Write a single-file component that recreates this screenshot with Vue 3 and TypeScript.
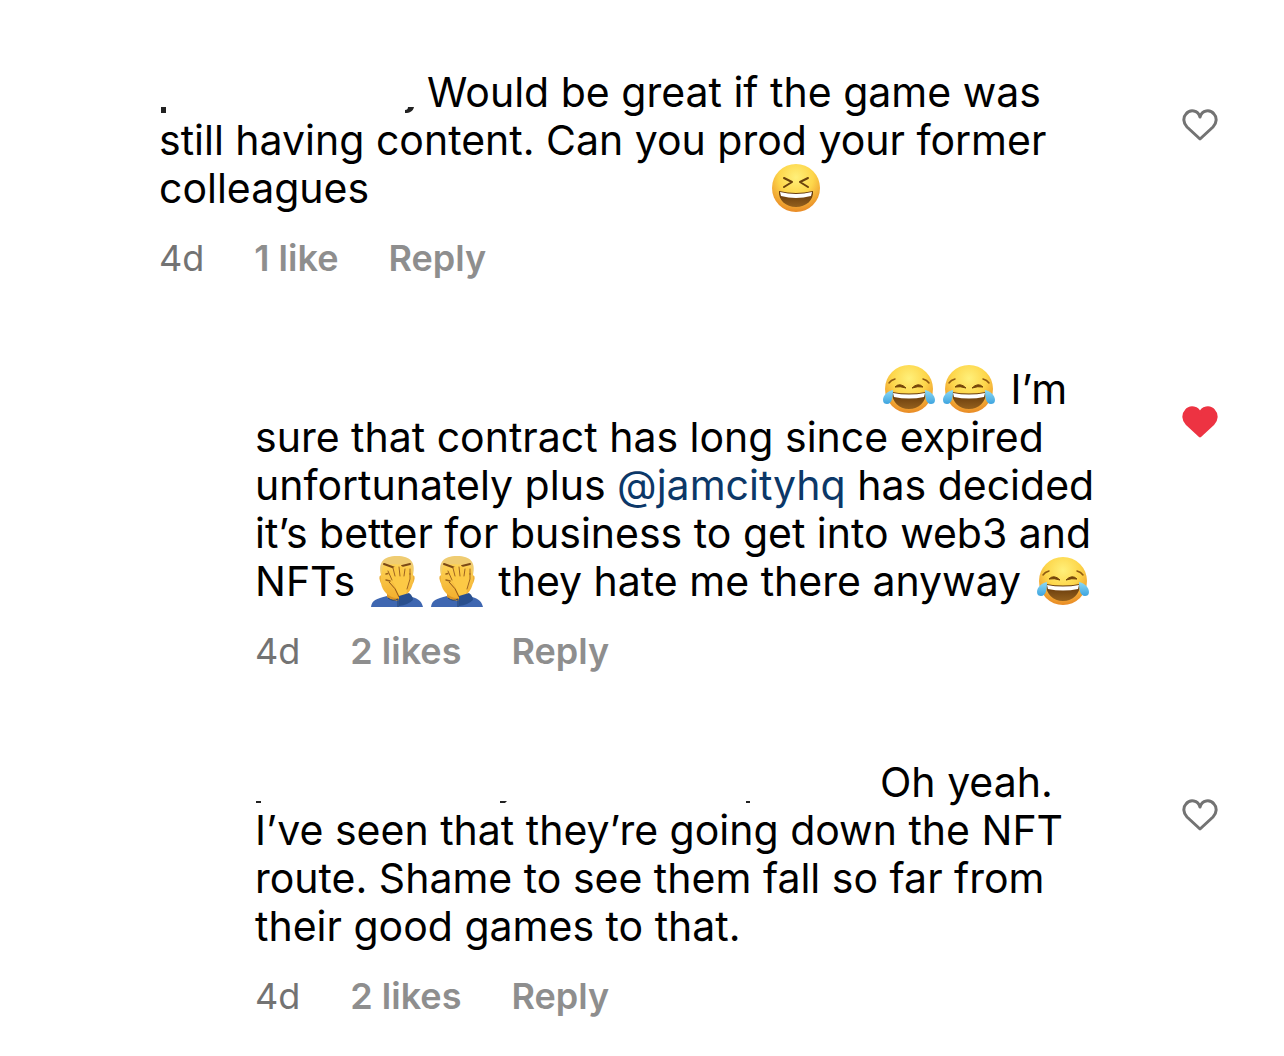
<script setup lang="ts">
import { ref } from 'vue'

type Part =
  | { kind: 'text'; text: string }
  | { kind: 'mention'; text: string }
  | { kind: 'gap'; width: number; marks?: string[] }
  | { kind: 'emoji'; name: 'laugh' | 'joy' | 'palm' }

interface Comment {
  id: number
  reply: boolean
  liked: boolean
  likes: string
  lines: Part[][]
}

const t = (text: string): Part => ({ kind: 'text', text })
const gap = (width: number, marks?: string[]): Part => ({ kind: 'gap', width, marks })
const emoji = (name: 'laugh' | 'joy' | 'palm'): Part => ({ kind: 'emoji', name })

const comments = ref<Comment[]>([
  {
    id: 1,
    reply: false,
    liked: false,
    likes: '1 like',
    lines: [
      [gap(268, ['M2 0h5v6h-5z', 'M246 6v-3q3 0 3-3h6c-1 4-4 6-9 6z']), t('Would be great if the game was')],
      [t('still having content. Can you prod your former')],
      [t('colleagues'), gap(397), emoji('laugh')],
    ],
  },
  {
    id: 2,
    reply: true,
    liked: true,
    likes: '2 likes',
    lines: [
      [gap(624), emoji('joy'), emoji('joy'), t(' I’m')],
      [t('sure that contract has long since expired')],
      [t('unfortunately plus '), { kind: 'mention', text: '@jamcityhq' }, t(' has decided')],
      [t('it’s better for business to get into web3 and')],
      [t('NFTs '), emoji('palm'), emoji('palm'), t(' they hate me there anyway '), emoji('joy')],
    ],
  },
  {
    id: 3,
    reply: true,
    liked: false,
    likes: '2 likes',
    lines: [
      [gap(625, ['M1 4h5v2h-5z', 'M245 4h7l-2 2h-5z', 'M491 4h4v2h-4z']), t('Oh yeah.')],
      [t('I’ve seen that they’re going down the NFT')],
      [t('route. Shame to see them fall so far from')],
      [t('their good games to that.')],
    ],
  },
])
</script>

<template>
  <svg class="defs" aria-hidden="true">
    <defs>
      <radialGradient id="face" cx="50%" cy="28%" r="72%">
        <stop offset="0" stop-color="#fff07a" />
        <stop offset=".5" stop-color="#fdd64b" />
        <stop offset="1" stop-color="#e98a25" />
      </radialGradient>
      <linearGradient id="mouth" x1="0" y1="0" x2="0" y2="1">
        <stop offset="0" stop-color="#5f3409" />
        <stop offset="1" stop-color="#94601d" />
      </linearGradient>
      <linearGradient id="tear" x1="0" y1="0" x2="0" y2="1">
        <stop offset="0" stop-color="#8bd9f5" />
        <stop offset="1" stop-color="#3ea4df" />
      </linearGradient>
      <linearGradient id="skin" x1="0" y1="0" x2="0" y2="1">
        <stop offset="0" stop-color="#ffd75a" />
        <stop offset="1" stop-color="#f3b02f" />
      </linearGradient>
      <symbol id="laugh" viewBox="0 0 52 52">
        <circle cx="26" cy="26" r="24" fill="url(#face)" />
        <path d="M14 16l8 4-8 5M38 16l-8 4 8 5" fill="none" stroke="#6a410c" stroke-width="2" stroke-linecap="round" stroke-linejoin="round" />
        <path d="M9 29q17 4 34 0c1 9-7 16-17 16S8 38 9 29z" fill="url(#mouth)" />
        <path d="M10 30q16 4 32 0l-1 4q-15 4-30 0z" fill="#fff" />
      </symbol>
      <symbol id="joy" viewBox="0 0 52 52">
        <circle cx="26" cy="26" r="24" fill="url(#face)" />
        <path d="M6 20q2-3 6-4M46 20q-2-3-6-4" fill="none" stroke="#8f5b13" stroke-width="1.5" stroke-linecap="round" />
        <path d="M12 24q5-5 11 1-6-2-11-1zM40 24q-5-5-11 1 6-2 11-1z" fill="#744509" stroke="#744509" stroke-width="1" stroke-linejoin="round" />
        <path d="M9 29q17 3 34 0c0 10-7 17-17 17S9 39 9 29z" fill="url(#mouth)" />
        <path d="M10 30q16 3 32 0l-1 4q-15 3-30 0z" fill="#fff" />
        <path d="M10 27C5 28 0 32 0 37c0 3 2 4 4 4 5 0 6-7 6-14zM42 27c5 1 10 5 10 10 0 3-2 4-4 4-5 0-6-7-6-14z" fill="url(#tear)" />
      </symbol>
      <symbol id="palm" viewBox="0 0 52 52">
        <path d="M0 52c1-7 5-8 16-11h20c11 2 14 4 16 11z" fill="#3f67b1" />
        <path d="M16 36h18v7q-9 6-18-1z" fill="#dc9627" />
        <path d="M11 20q-4 0-2 6 1 4 4 4zM41 20q4 0 2 6-1 4-4 4z" fill="#edb03a" />
        <path d="M10 17Q10 5 26 5t16 12v10c-1 9-8 16-16 16s-15-7-16-15z" fill="url(#skin)" />
        <path d="M10 20C7 8 12 1 26 1s19 7 16 19l-2-9q-14-3-28-1z" fill="#efcc72" />
        <path d="M13 9l11 4M31 11l8-2" fill="none" stroke="#7b4916" stroke-width="2" stroke-linecap="round" />
        <path d="M15 19l4-1M15 25l4 1M37 19h2" fill="none" stroke="#9a6118" stroke-width="1.5" stroke-linecap="round" />
        <path d="M17 16q2-3 4 0l2 6-1-9q2-3 4 0l2 8v-9q2-2 4 0l1 9 2-8q2-2 3 1l1 12-3 9-1 5-6 2-6-13-5-8z" fill="#fcc945" />
        <path d="M17 16l4 9M22 13l2 8M28 12l1 9M34 14l-1 7M39 14v10l-3 10" fill="none" stroke="#9f6422" stroke-width="1" stroke-linecap="round" />
        <path d="M18 27q7 6 10 15" fill="none" stroke="#8f5518" stroke-width="1" />
        <path d="M28 41l10-3q4 3 4 7-5 5-14 6z" fill="#294f8e" />
        <path d="M17 43q5 4 10 1v8" fill="none" stroke="#29466e" stroke-width="1" />
      </symbol>
    </defs>
  </svg>

  <main class="thread">
    <article v-for="c in comments" :key="c.id" class="comment" :class="{ reply: c.reply }">
      <div class="body">
        <p class="text">
          <span v-for="(line, i) in c.lines" :key="i" class="line"><template v-for="(p, j) in line" :key="j"><template v-if="p.kind === 'text'">{{ p.text }}</template><a v-else-if="p.kind === 'mention'" class="mention" href="#">{{ p.text }}</a><span v-else-if="p.kind === 'gap'" class="gap" :style="{ width: p.width + 'px' }"><svg v-if="p.marks" class="marks" :width="p.width" height="8" aria-hidden="true"><path v-for="m in p.marks" :key="m" :d="m" /></svg></span><svg v-else class="emoji" role="img" :aria-label="p.name"><use :href="'#' + p.name" /></svg></template></span>
        </p>
        <div class="meta">
          <time>4d</time>
          <button type="button">{{ c.likes }}</button>
          <button type="button">Reply</button>
        </div>
      </div>
      <button type="button" class="heart" :class="{ liked: c.liked }" :aria-pressed="c.liked" aria-label="Like" @click="c.liked = !c.liked">
        <svg viewBox="0 0 36 32" width="36" height="32">
          <path d="M18 30L5 18C1 14 1 8 4 5c4-5 12-4 14 3 2-7 10-8 14-3 3 3 3 9-1 13z" />
        </svg>
      </button>
    </article>
  </main>
</template>

<style>
body {
  margin: 0;
  background: #fff;
}
</style>

<style scoped>
.defs {
  position: absolute;
  width: 0;
  height: 0;
}
.thread {
  display: flex;
  flex-direction: column;
  gap: 85px;
  padding: 68px 66px 32px 159px;
  font-family: Inter, "Liberation Sans", sans-serif;
  color: #000;
}
.comment {
  display: flex;
  align-items: flex-start;
}
.reply {
  padding-left: 96px;
}
.body {
  flex: 1;
  min-width: 0;
}
.text {
  margin: 0;
  font-size: 41px;
  line-height: 48px;
}
.line {
  display: block;
  height: 48px;
  white-space: pre;
}
.mention {
  color: #0c3868;
  text-decoration: none;
}
.gap {
  display: inline-block;
  height: 8px;
  vertical-align: -8px;
}
.marks {
  display: block;
  fill: #222;
}
.emoji {
  width: 52px;
  height: 52px;
  margin: -2px 4px;
  vertical-align: top;
}
.meta {
  display: flex;
  gap: 50px;
  margin-top: 24px;
  font-size: 36px;
  line-height: 44px;
  color: #737373;
}
button {
  padding: 0;
  border: 0;
  background: none;
  font: inherit;
  cursor: pointer;
}
.meta button {
  font-weight: 600;
  color: #8e8e8e;
}
.heart {
  margin-top: 41px;
}
.heart svg {
  display: block;
  fill: none;
  stroke: #737373;
  stroke-width: 3;
  stroke-linejoin: round;
}
.heart.liked svg {
  fill: #ed3342;
  stroke: #ed3342;
}
</style>
